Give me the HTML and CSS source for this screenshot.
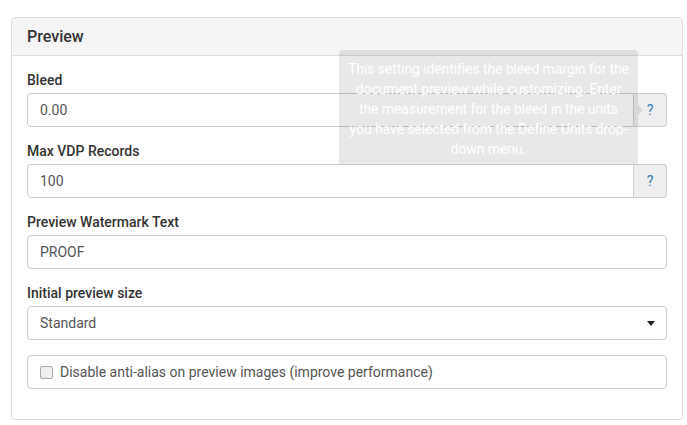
FILE: index.html
```html
<!DOCTYPE html>
<html>
<head>
<meta charset="utf-8">
<link rel="stylesheet" href="styles.css">
</head>
<body>
<div class="panel">
  <div class="panel-heading">Preview</div>
  <div class="panel-body">
    <div class="form-group">
      <label class="label">Bleed</label>
      <div class="input-group">
        <div class="input">0.00</div>
        <div class="addon">?</div>
        <div class="tooltip">This setting identifies the bleed margin for the<br>document preview while customizing. Enter<br>the measurement for the bleed in the units<br>you have selected from the Define Units drop-<br>down menu.</div>
      </div>
    </div>
    <div class="form-group">
      <label class="label">Max VDP Records</label>
      <div class="input-group">
        <div class="input">100</div>
        <div class="addon">?</div>
      </div>
    </div>
    <div class="form-group">
      <label class="label">Preview Watermark Text</label>
      <div class="input full">PROOF</div>
    </div>
    <div class="form-group">
      <label class="label">Initial preview size</label>
      <div class="input full select">
        <span>Standard</span>
        <span class="caret"></span>
      </div>
    </div>
    <div class="form-group check-group">
      <div class="check-box">
        <span class="checkbox"></span>
        <span>Disable anti-alias on preview images (improve performance)</span>
      </div>
    </div>
  </div>
</div>
</body>
</html>
```

FILE: styles.css
```css
* { box-sizing: border-box; }
html, body { margin: 0; background: #fff; }
body {
  padding: 17px 4px 0 11px;
  font-family: Roboto, "Liberation Sans", sans-serif;
  font-size: 14px;
  line-height: 20px;
  color: #333;
}
.panel {
  border: 1px solid #ddd;
  border-radius: 4px;
  box-shadow: 0 1px 1px rgba(0,0,0,0.05);
}
.panel-heading {
  background: #f5f5f5;
  border-bottom: 1px solid #ddd;
  border-radius: 3px 3px 0 0;
  padding: 8px 15px;
  font-size: 16px;
  font-weight: 500;
  line-height: 21px;
  color: #333;
}
.panel-body {
  padding: 14px 15px 15px 15px;
}
.form-group {
  margin-bottom: 14px;
}
.check-group {
  margin-top: 15px;
  margin-bottom: 15px;
}
.label {
  display: block;
  font-weight: 500;
  margin-bottom: 3px;
}
.input-group {
  position: relative;
  display: flex;
}
.input {
  flex: 1;
  height: 34px;
  padding: 6px 12px;
  border: 1px solid #ccc;
  border-radius: 4px 0 0 4px;
  color: #555;
  background: #fff;
}
.input.full {
  border-radius: 4px;
}
.addon {
  width: 33px;
  height: 34px;
  border: 1px solid #ccc;
  border-left: 0;
  border-radius: 0 4px 4px 0;
  background: #eee;
  color: #337ab7;
  font-size: 14px;
  display: flex;
  align-items: center;
  justify-content: center;
}
.select {
  display: flex;
  align-items: center;
  justify-content: space-between;
  padding-right: 11px;
}
.caret {
  width: 0;
  height: 0;
  border-left: 4px solid transparent;
  border-right: 4px solid transparent;
  border-top: 5px solid #222;
}
.check-box {
  height: 34px;
  border: 1px solid #ccc;
  border-radius: 4px;
  display: flex;
  align-items: center;
  padding-left: 12px;
  color: #555;
}
.checkbox {
  width: 13px;
  height: 13px;
  border: 1px solid #aaa;
  border-radius: 2px;
  background: #eee;
  margin-right: 7px;
}
.tooltip {
  position: absolute;
  right: 29px;
  top: -43px;
  width: 299px;
  padding: 9px 4px 10px;
  background: rgba(0,0,0,0.09);
  color: #fff;
  text-align: center;
  white-space: nowrap;
  border-radius: 4px;
  font-size: 14px;
  line-height: 20px;
  letter-spacing: -0.1px;
}
.tooltip::after {
  content: "";
  position: absolute;
  right: -5px;
  top: 50%;
  margin-top: -5px;
  border-top: 5px solid transparent;
  border-bottom: 5px solid transparent;
  border-left: 5px solid rgba(0,0,0,0.09);
}
```
